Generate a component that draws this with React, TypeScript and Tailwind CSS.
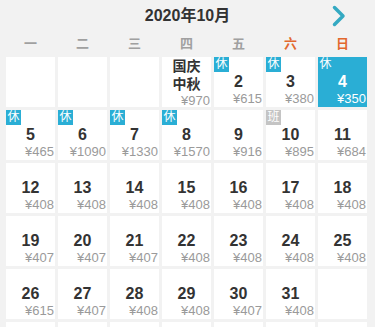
type Day = {
  day?: number;
  label?: string[];
  price?: number;
  tag?: "休" | "班";
  selected?: boolean;
};

const weekdays = ["一", "二", "三", "四", "五", "六", "日"];

const days: Day[] = [
  {},
  {},
  {},
  { label: ["国庆", "中秋"], price: 970 },
  { day: 2, price: 615, tag: "休" },
  { day: 3, price: 380, tag: "休" },
  { day: 4, price: 350, tag: "休", selected: true },
  { day: 5, price: 465, tag: "休" },
  { day: 6, price: 1090, tag: "休" },
  { day: 7, price: 1330, tag: "休" },
  { day: 8, price: 1570, tag: "休" },
  { day: 9, price: 916 },
  { day: 10, price: 895, tag: "班" },
  { day: 11, price: 684 },
  { day: 12, price: 408 },
  { day: 13, price: 408 },
  { day: 14, price: 408 },
  { day: 15, price: 408 },
  { day: 16, price: 408 },
  { day: 17, price: 408 },
  { day: 18, price: 408 },
  { day: 19, price: 407 },
  { day: 20, price: 407 },
  { day: 21, price: 407 },
  { day: 22, price: 408 },
  { day: 23, price: 408 },
  { day: 24, price: 408 },
  { day: 25, price: 408 },
  { day: 26, price: 615 },
  { day: 27, price: 407 },
  { day: 28, price: 408 },
  { day: 29, price: 408 },
  { day: 30, price: 407 },
  { day: 31, price: 408 },
  {},
  {},
  {},
  {},
  {},
  {},
  {},
  {},
];

const DayCell = ({ d }: { d: Day }) => {
  const sel = d.selected;
  return (
    <div
      className={`relative h-[50px] flex flex-col ${sel ? "bg-[#2aaed5]" : "bg-white"}`}
    >
      {d.tag && (
        <span
          className={`absolute left-0 top-0 w-[15px] h-[15px] text-[12px] leading-[15px] text-center text-white ${
            d.tag === "班" ? "bg-[#c4c4c4]" : "bg-[#2aaed5]"
          }`}
        >
          {d.tag}
        </span>
      )}
      {d.label ? (
        <div className="text-center text-[14px] leading-[18px] font-bold text-[#333]">
          {d.label.map((l) => (
            <div key={l}>{l}</div>
          ))}
        </div>
      ) : d.day ? (
        <div
          className={`pt-[16px] text-center text-[16px] leading-[18px] font-bold font-['Liberation_Sans',sans-serif] ${
            sel ? "text-white" : "text-[#333]"
          }`}
        >
          {d.day}
        </div>
      ) : null}
      {d.price !== undefined && (
        <div
          className={`pr-[1px] text-right text-[13px] leading-[15px] font-['Liberation_Sans',sans-serif] ${
            sel ? "text-white" : "text-[#9a9a9a]"
          }`}
        >
          ¥{d.price}
        </div>
      )}
    </div>
  );
};

export default function App() {
  return (
    <div className="w-[375px] h-[327px] overflow-hidden bg-[#f2f2f2] font-['Liberation_Sans','Noto_Sans_CJK_SC',sans-serif]">
      {/* Month header */}
      <div className="grid grid-cols-[1fr_auto_1fr] items-center h-[32px]">
        <div />
        <h1 className="text-[16px] font-bold text-[#333]">2020年10月</h1>
        <div className="flex justify-end pr-[29px]">
          <svg width="14" height="22" viewBox="0 0 14 22" fill="none">
            <polyline
              points="2.5,2.5 11,11 2.5,19.5"
              stroke="#34a9c2"
              strokeWidth="3.5"
              strokeLinecap="round"
              strokeLinejoin="round"
            />
          </svg>
        </div>
      </div>

      {/* Weekday labels */}
      <div className="grid grid-cols-7 gap-[3px] pl-[6px] pr-[8px] h-[23px] items-center">
        {weekdays.map((w, i) => (
          <div
            key={w}
            className={`text-center text-[13px] font-bold ${i >= 5 ? "text-[#e2682e]" : "text-[#a0a0a0]"}`}
          >
            {w}
          </div>
        ))}
      </div>

      {/* Days */}
      <div className="grid grid-cols-7 gap-[3px] pl-[6px] pr-[8px] mt-[2px]">
        {days.map((d, i) => (
          <DayCell key={i} d={d} />
        ))}
      </div>
    </div>
  );
}
